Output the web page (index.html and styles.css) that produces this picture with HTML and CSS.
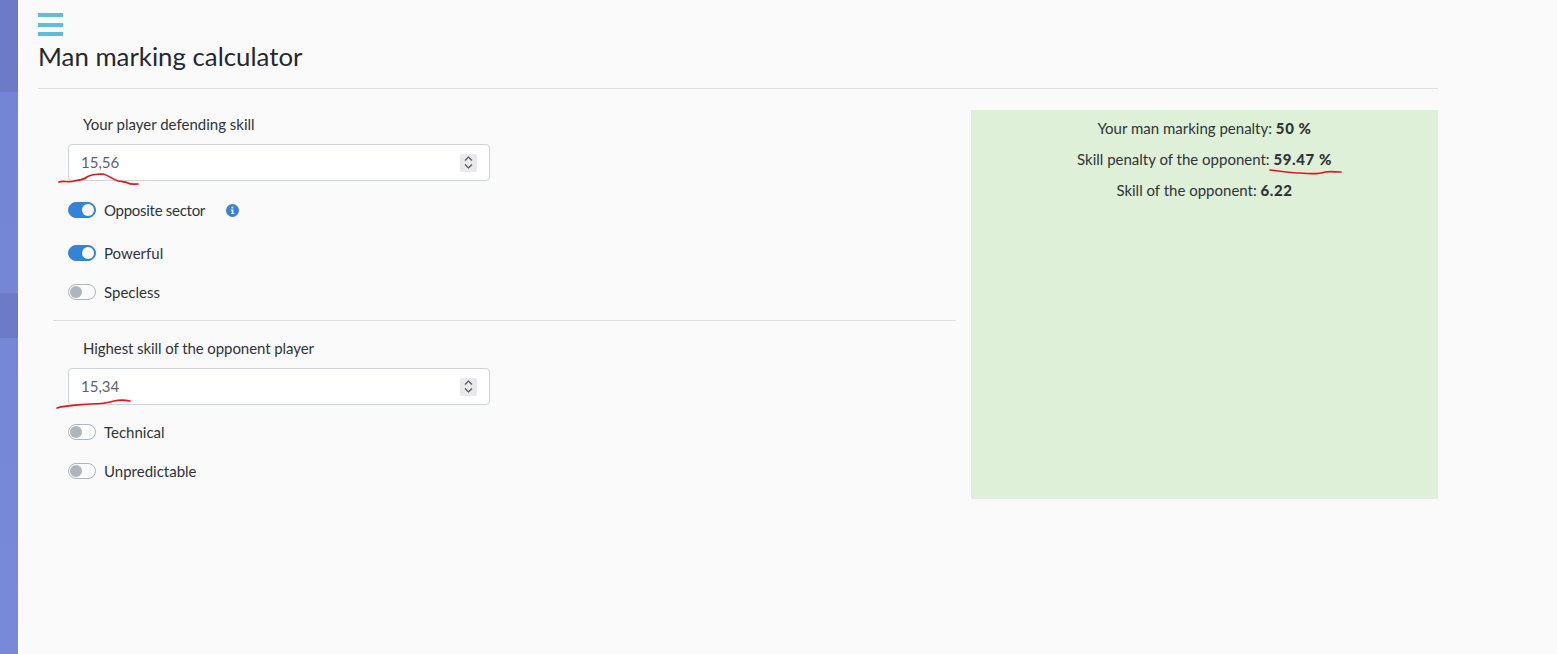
FILE: index.html
```html
<!DOCTYPE html>
<html lang="en">
<head>
  <meta charset="UTF-8" />
  <title>Man marking calculator</title>
  <link rel="stylesheet" href="styles.css">
</head>
<body>

  <!-- Sidebar strip -->
  <div class="sidebar">
    <div class="side-active first"></div>
    <div class="side-active second"></div>
  </div>

  <div class="main">
    <div class="menu-btn"><span></span><span></span><span></span></div>
    <h1>Man marking calculator</h1>
    <div class="title-line"></div>

    <div class="columns">
      <div class="form-col">
        <div class="field-label">Your player defending skill</div>
        <div class="num-input">
          <span>15,56</span>
          <span class="spinner">
            <svg width="11" height="15" viewBox="0 0 11 15"><path d="M2 5.5 L5.5 2 L9 5.5 M2 9.5 L5.5 13 L9 9.5" fill="none" stroke="#555" stroke-width="1.2"/></svg>
          </span>
        </div>
        <div class="switch-row row-a">
          <span class="switch on"></span><span class="tight">Opposite sector</span>
          <svg class="info" width="13" height="13" viewBox="0 0 13 13"><circle cx="6.5" cy="6.5" r="6.5" fill="#3583d6"/><rect x="5.6" y="2.6" width="1.8" height="1.8" fill="#fff"/><path d="M4.9 5.5h2.5v3.4h.8v1H4.9v-1h.8V6.5h-.8z" fill="#fff"/></svg>
        </div>
        <div class="switch-row row-b"><span class="switch on"></span><span>Powerful</span></div>
        <div class="switch-row row-c"><span class="switch"></span><span>Specless</span></div>

        <div class="form-line"></div>

        <div class="field-label tighter">Highest skill of the opponent player</div>
        <div class="num-input">
          <span>15,34</span>
          <span class="spinner">
            <svg width="11" height="15" viewBox="0 0 11 15"><path d="M2 5.5 L5.5 2 L9 5.5 M2 9.5 L5.5 13 L9 9.5" fill="none" stroke="#555" stroke-width="1.2"/></svg>
          </span>
        </div>
        <div class="switch-row row-d"><span class="switch"></span><span>Technical</span></div>
        <div class="switch-row row-c"><span class="switch"></span><span>Unpredictable</span></div>
      </div>

      <div class="result">
        <p>Your man marking penalty: <b>50 %</b></p>
        <p>Skill penalty of the opponent: <b>59.47 %</b></p>
        <p>Skill of the opponent: <b>6.22</b></p>
      </div>
    </div>
  </div>

  <!-- Red pen marks drawn on top of the screenshot -->
  <svg class="pen" width="1557" height="654" viewBox="0 0 1557 654">
    <path d="M59 182 C64 180 68 183 74 181 C79 180 83 180 87 177 C90 175 98 174 103 174 C108 175 112 179 118 181 C122 182 125 181 128 183 C131 185 134 184 138 184"/>
    <path d="M57 408 C66 405 78 405 90 404 C100 404 108 403 114 401 C119 400 125 400 130 401"/>
    <path d="M1270 170 C1280 171 1290 173 1300 173 C1310 174 1320 174 1325 172 C1330 171 1336 172 1341 172"/>
  </svg>

</body>
</html>
```

FILE: styles.css
```css
body {
  margin: 0;
  height: 654px;
  overflow: hidden;
  display: flex;
  background: #fafafa;
  color: #2f3438;
  font-family: 'Lato', 'Noto Sans', sans-serif;
  font-size: 15px;
}

.sidebar {
  width: 18px;
  height: 654px;
  flex-shrink: 0;
  display: flex;
  flex-direction: column;
  background: linear-gradient(180deg, #7484d4 0%, #7789d8 100%);
}

.side-active {
  background: #6b7bc6;
}

.side-active.first {
  height: 92px;
  margin-bottom: 201px;
}

.side-active.second {
  height: 45px;
}

.main {
  width: 1400px;
  margin-left: 20px;
}

.menu-btn {
  width: 25px;
  height: 23px;
  margin-top: 13px;
  display: flex;
  flex-direction: column;
  justify-content: space-between;
}

.menu-btn span {
  height: 4px;
  background: #5fbcdc;
}

h1 {
  margin: 4px 0 0;
  font-size: 25.8px;
  font-weight: 400;
  line-height: 32px;
  color: #24292e;
}

.title-line {
  height: 1px;
  margin-top: 16px;
  background: #dfe0e0;
}

.columns {
  display: flex;
  margin-top: 21px;
}

.form-col {
  width: 933px;
  box-sizing: border-box;
  padding: 0 15px;
}

.field-label {
  padding-left: 30px;
  line-height: 20px;
  margin-top: 4px;
}

.tighter {
  letter-spacing: -0.08px;
}

.num-input {
  width: 422px;
  height: 37px;
  box-sizing: border-box;
  margin: 10px 0 0 15px;
  padding: 0 12px 2px;
  display: flex;
  align-items: center;
  justify-content: space-between;
  background: #fff;
  border: 1px solid #ced4da;
  border-radius: 4px;
  color: #5c6269;
}

.spinner {
  width: 17px;
  height: 18px;
  margin-top: 2px;
  display: flex;
  align-items: center;
  justify-content: center;
  background: #e9e9ed;
  border-radius: 2px;
}

.switch-row {
  display: flex;
  align-items: center;
  gap: 8px;
  height: 20px;
  margin-left: 15px;
}

.row-a { margin-top: 19px; }
.row-b { margin-top: 23px; }
.row-c { margin-top: 19px; }
.row-d { margin-top: 17px; }

.tight {
  letter-spacing: -0.28px;
}

.switch {
  position: relative;
  width: 28px;
  height: 16px;
  box-sizing: border-box;
  background: #fafafa;
  border: 1px solid #adb5bd;
  border-radius: 8px;
}

.switch::after {
  content: "";
  position: absolute;
  left: 1px;
  top: 1px;
  width: 12px;
  height: 12px;
  background: #adb5bd;
  border-radius: 50%;
}

.switch.on {
  background: #3583d6;
  border-color: #3583d6;
}

.switch.on::after {
  left: 13px;
  background: #fff;
}

.info {
  margin-left: 13px;
}

.form-line {
  height: 1px;
  margin-top: 18px;
  margin-bottom: 17px;
  background: #dfe0e0;
}

.result {
  width: 467px;
  height: 389px;
  box-sizing: border-box;
  padding-top: 8px;
  background: #dff0d8;
  text-align: center;
}

.result p {
  margin: 0 0 10px;
  line-height: 21px;
}

.result b {
  font-weight: 900;
  letter-spacing: 0.6px;
}

.pen {
  position: absolute;
  left: 0;
  top: 0;
  pointer-events: none;
}

.pen path {
  fill: none;
  stroke: #e8141c;
  stroke-width: 1.7;
  stroke-linecap: round;
}
```
